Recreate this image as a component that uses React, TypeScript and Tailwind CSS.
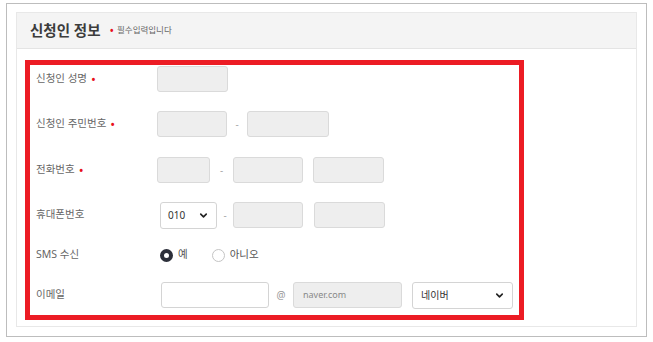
import { ChevronDown } from "lucide-react";

const font = { fontFamily: '"Noto Sans", "Noto Sans CJK KR", sans-serif' };

const Dot = () => <span className="ml-[4px] text-[#e8101a] text-[13px] leading-none">•</span>;

const Box = ({ w, white }: { w: string; white?: boolean }) => (
  <div
    className={`${w} h-[26px] rounded-[3px] border ${
      white ? "bg-white border-[#d4d4d4]" : "bg-[#eeeeee] border-[#dadada]"
    }`}
  />
);

const Dash = ({ w }: { w: string }) => (
  <div className={`${w} text-center text-[10px] text-[#aaa]`}>-</div>
);

const Label = ({ text, req }: { text: string; req?: boolean }) => (
  <div className="w-[127px] pl-[6px] flex items-center text-[10.5px] text-[#666]">
    {text}
    {req && <Dot />}
  </div>
);

export default function App() {
  return (
    <div className="w-[653px] h-[342px] bg-white pt-[3px] pl-[6px]" style={font}>
      <div className="w-[641px] h-[334px] border border-[#bdbdbd] pt-[8px] pl-[9px]">
        <div className="w-[621px] h-[315px] border border-[#e8e8e8]">
          {/* header */}
          <div className="h-[36px] bg-[#f4f4f4] border-b border-[#e4e4e4] flex items-center pl-[13px]">
            <span className="text-[14.5px] font-bold text-[#3c3c3c]">신청인 정보</span>
            <span className="ml-[9px] text-[#e8101a] text-[12px] leading-none">•</span>
            <span className="ml-[3px] text-[8.5px] text-[#666]">필수입력입니다</span>
          </div>

          {/* body */}
          <div className="pt-[11px] pl-[8px]">
            <div className="w-[499px] h-[260px] border-[5px] border-[#ec1c24]">
              <div className="flex h-[28px] items-center">
                <Label text="신청인 성명" req />
                <Box w="w-[71px]" />
              </div>

              <div className="flex h-[28px] items-center mt-[17px]">
                <Label text="신청인 주민번호" req />
                <Box w="w-[70px]" />
                <Dash w="w-[20px]" />
                <Box w="w-[82px]" />
              </div>

              <div className="flex h-[28px] items-center mt-[18px]">
                <Label text="전화번호" req />
                <Box w="w-[53px]" />
                <Dash w="w-[23px]" />
                <Box w="w-[70px]" />
                <div className="w-[10px]" />
                <Box w="w-[71px]" />
              </div>

              <div className="flex h-[28px] items-center mt-[17px]">
                <Label text="휴대폰번호" />
                <div className="ml-[3px] w-[57px] h-[27px] rounded-[3px] border border-[#d4d4d4] bg-white flex items-center justify-between px-[7px] text-[10px] text-[#333]">
                  010
                  <ChevronDown size={11} strokeWidth={3.5} className="text-[#222]" />
                </div>
                <Dash w="w-[16px]" />
                <Box w="w-[70px]" />
                <div className="w-[11px]" />
                <Box w="w-[71px]" />
              </div>

              <div className="flex h-[28px] items-center mt-[12px]">
                <Label text="SMS 수신" />
                <div className="ml-[3px] flex items-center text-[10.5px] text-[#555]">
                  <span className="w-[13px] h-[13px] rounded-full border-[4px] border-[#2c2f3a] bg-white" />
                  <span className="ml-[5px]">예</span>
                  <span className="ml-[24px] w-[13px] h-[13px] rounded-full border border-[#c4c4c4] bg-white" />
                  <span className="ml-[5px]">아니오</span>
                </div>
              </div>

              <div className="flex h-[28px] items-center mt-[12px]">
                <Label text="이메일" />
                <div className="ml-[4px]">
                  <Box w="w-[108px]" white />
                </div>
                <div className="w-[24px] text-center text-[10px] text-[#999]">@</div>
                <div className="w-[109px] h-[26px] rounded-[3px] border border-[#dadada] bg-[#eeeeee] flex items-center pl-[9px] text-[9px] text-[#888]">
                  naver.com
                </div>
                <div className="ml-[10px] w-[101px] h-[27px] rounded-[3px] border border-[#d4d4d4] bg-white flex items-center justify-between pl-[8px] pr-[7px] text-[10px] text-[#333]">
                  네이버
                  <ChevronDown size={11} strokeWidth={3.5} className="text-[#222]" />
                </div>
              </div>
            </div>
          </div>
        </div>
      </div>
    </div>
  );
}
